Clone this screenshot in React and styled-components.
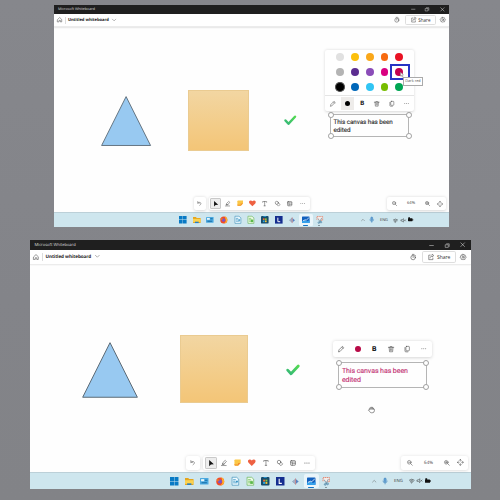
import React from 'react';
import styled, { createGlobalStyle, ThemeProvider, css } from 'styled-components';

const u = (n) => ({ theme }) => `${n * theme.k}px`;

const GlobalStyle = createGlobalStyle`
  * { box-sizing: border-box; }
  body {
    margin: 0;
    font-family: "Open Sans", "Noto Sans", sans-serif;
    text-rendering: geometricPrecision;
    color: #333;
  }
  svg { display: block; flex: none; overflow: visible; }
`;

const Desktop = styled.main`
  width: 500px;
  height: 500px;
  padding: 5px 0 0;
  overflow: hidden;
  background: linear-gradient(#86878c, #838489 60%, #828387);
  display: flex;
  flex-direction: column;
  gap: 13px;
`;

const Window = styled.section`
  width: ${({ theme }) => theme.width}px;
  height: ${({ theme }) => theme.height}px;
  margin-left: ${({ theme }) => theme.left}px;
  flex: none;
  display: flex;
  flex-direction: column;
  background: #fefefe;
  overflow: hidden;
`;

const TitleBar = styled.header`
  height: ${u(9)};
  flex: none;
  display: flex;
  align-items: center;
  padding-left: ${u(4)};
  background: #1f1f1f;
  color: #dedede;
  font-size: ${u(3.65)};
  line-height: 1;
  white-space: nowrap;
`;

const AppName = styled.span`
  padding-top: ${u(1.2)};
`;

const Grow = styled.div`
  flex: 1;
`;

const Cell = styled.span`
  width: ${({ $w, theme }) => $w * theme.k}px;
  flex: none;
  display: flex;
  align-items: center;
  justify-content: center;
`;

const Header = styled.div`
  height: ${u(13)};
  flex: none;
  display: flex;
  align-items: center;
  background: #fff;
  border-bottom: ${u(0.6)} solid #ececec;
  box-shadow: 0 ${u(0.5)} ${u(1.2)} #0000001a;
  position: relative;
`;

const BoardName = styled.strong`
  width: ${u(43)};
  padding: ${u(1.6)} 0 0 ${u(2.3)};
  font-size: ${u(4.15)};
  font-weight: 700;
  line-height: 1.5;
  letter-spacing: -0.015em;
  white-space: nowrap;
  color: #222;
`;

const Divider = styled.i`
  width: ${u(0.5)};
  height: ${u(7)};
  margin-left: ${u(-0.3)};
  background: #dcdcdc;
`;

const ShareButton = styled.button`
  width: ${u(30.5)};
  height: ${u(10.6)};
  padding: 0 ${u(4.2)} 0 ${u(4.4)};
  display: flex;
  align-items: center;
  justify-content: space-between;
  font-family: inherit;
  font-size: ${u(4.5)};
  color: #333;
  background: #fff;
  border: ${u(0.7)} solid #dedede;
  border-radius: ${u(1.6)};
`;

const Canvas = styled.div`
  flex: 1;
  position: relative;
`;

const Placed = styled.div`
  position: absolute;
  left: ${({ $x, theme }) => $x * theme.k}px;
  top: ${({ $y, theme }) => $y * theme.k + theme.dy}px;
`;

const Note = styled.div`
  width: ${u(61)};
  height: ${u(61)};
  background: linear-gradient(#f2d6a2, #f3cc88 60%, #f3c577);
  border: ${u(0.5)} solid #eacb91;
`;

const TextFrame = styled.div`
  position: relative;
  width: ${u(79.3)};
  height: ${u(22.7)};
  padding: ${u(3.7)} 0 0 ${u(2.4)};
  border: ${u(0.9)} solid #b5b5b5;
  font-family: Roboto, "Open Sans", sans-serif;
  font-size: ${u(6.3)};
  letter-spacing: -0.01em;
  line-height: ${u(7.9)};
  white-space: nowrap;
  color: ${({ $ink }) => $ink};
  -webkit-text-stroke: 0.12px ${({ $ink }) => $ink};
`;

const Handle = styled.i`
  position: absolute;
  width: ${u(5.8)};
  height: ${u(5.8)};
  border: ${u(0.85)} solid #a0a0a0;
  border-radius: 50%;
  background: #fff;
  ${({ $right }) => ($right ? css`right: ${u(-3.2)};` : css`left: ${u(-3.2)};`)}
  ${({ $bottom }) => ($bottom ? css`bottom: ${u(-3.2)};` : css`top: ${u(-3.2)};`)}
`;

const Popover = styled.div`
  width: ${u(89)};
  background: #fff;
  border-radius: ${u(2)};
  box-shadow: 0 ${u(0.4)} ${u(3)} #00000028;
`;

const Palette = styled.div`
  display: grid;
  grid-template-columns: repeat(5, ${u(14.85)});
  grid-auto-rows: ${u(14.8)};
  justify-content: center;
  padding-bottom: ${u(0.6)};
  border-bottom: ${u(0.5)} solid #e5e5e5;
`;

const Swatch = styled.div`
  display: flex;
  align-items: center;
  justify-content: center;
  position: relative;
  &::before {
    content: "";
    width: ${u(7.9)};
    height: ${u(7.9)};
    border-radius: 50%;
    background: ${({ $color }) => $color};
    ${({ $picked }) => $picked && css`
      box-shadow: 0 0 0 0.5px #777, 0 0 0 1px #333;
    `}
  }
`;

const Highlight = styled.span`
  position: absolute;
  left: -2px;
  top: -1px;
  width: 20px;
  height: 16px;
  border: 2px solid #2633c5;
`;

const Pointer = styled.span`
  position: absolute;
  left: 7px;
  top: 7px;
`;

const Tooltip = styled.span`
  position: absolute;
  left: 11px;
  top: 12.5px;
  width: 20px;
  height: 8.5px;
  display: flex;
  align-items: center;
  justify-content: center;
  z-index: 2;
  background: #fff;
  border: 0.8px solid #aaa;
  color: #555;
  font-size: 3.8px;
  line-height: 1;
  white-space: nowrap;
`;

const FormatBar = styled.div`
  height: ${u(14.8)};
  display: flex;
  align-items: center;
  justify-content: center;
`;

const FormatCell = styled.span`
  width: ${u(14.8)};
  height: 100%;
  display: flex;
  align-items: center;
  justify-content: center;
`;

const FillPad = styled.span`
  width: ${u(12.4)};
  height: ${u(12.4)};
  display: flex;
  align-items: center;
  justify-content: center;
  background: ${({ $open }) => ($open ? '#eeecea' : 'transparent')};
  &::before {
    content: "";
    width: ${u(5.2)};
    height: ${u(5.2)};
    border-radius: 50%;
    background: ${({ $color }) => $color};
  }
`;

const Bold = styled.b`
  padding-top: ${u(0.8)};
  font-family: Inter, sans-serif;
  font-weight: 800;
  font-size: ${u(6)};
  line-height: 1;
  color: #222;
`;

const Dock = styled.div`
  position: absolute;
  left: 0;
  right: 0;
  bottom: ${u(2)};
  display: flex;
  padding: 0 ${u(3)} 0 ${u(139.8)};
`;

const Pill = styled.div`
  height: ${u(13)};
  display: flex;
  align-items: center;
  padding: 0 ${({ $pad = 0, theme }) => $pad * theme.k}px;
  margin-right: ${({ $gap = 0, theme }) => $gap * theme.k}px;
  background: #fff;
  border-radius: ${u(2)};
  box-shadow: 0 ${u(0.4)} ${u(3)} #00000028;
`;

const ToolCell = styled(Cell)`
  width: ${u(12.4)};
  height: ${u(11)};
  ${({ $active }) => $active && css`
    background: #ededed;
    border: ${u(0.6)} solid #c9c9c9;
    border-radius: ${u(1)};
    width: ${u(11)};
    margin-right: ${u(0.4)};
  `}
`;

const ZoomLabel = styled(Cell)`
  padding-top: ${u(0.5)};
  font-size: ${u(4.1)};
  color: #444;
`;

const TaskBar = styled.footer`
  height: ${u(15)};
  flex: none;
  display: flex;
  align-items: center;
  padding-left: ${u(122.2)};
  background: #cee6ee;
  border-top: ${u(0.5)} solid #bcd0d8;
`;

const AppSlot = styled.span`
  width: ${u(13.65)};
  height: ${u(12.4)};
  display: flex;
  align-items: center;
  justify-content: center;
  border-radius: ${u(1.5)};
  background: ${({ $active }) => ($active ? '#eaf5fa' : 'transparent')};
  position: relative;
  ${({ $running, $active }) => $running && css`
    &::after {
      content: "";
      position: absolute;
      bottom: 0;
      height: ${u(1)};
      width: ${u($active ? 5 : 2)};
      border-radius: ${u(1)};
      background: ${$active ? '#1272c4' : '#7b8c96'};
    }
  `}
`;

const Lang = styled(Cell)`
  padding-top: ${u(0.6)};
  font-size: ${u(3.9)};
  color: #333;
`;

const line = { fill: 'none', stroke: '#4a4a4a', strokeWidth: 1.5, strokeLinecap: 'round', strokeLinejoin: 'round' };

const drawings = {
  home: <path {...line} d="M2 7.2 8 1.5l6 5.7v7.3h-4V10H6v4.5H2z" />,
  chevron: <path {...line} d="m1.5 4.5 6.5 6.5 6.5-6.5" />,
  caretUp: <path {...line} d="m2 11 6-6 6 6" />,
  timer: <g {...line}><circle cx="8" cy="9" r="5.8" /><path d="M8 6v3M6 1h4M12.8 3.2l1.4 1.2" /></g>,
  share: <g {...line}><path d="M6 3H2v12h11v-4" /><path d="M5.5 10.5C6 7 8 5.5 11 5.5V8l4.5-4L11 .5v2.3" /></g>,
  gear: <g {...line}><path d="m8 .5 2 2.3 2.9-.5.7 2.9L16 8l-2.4 2.8-.7 2.9-2.9-.4-2 2.2-2-2.2-2.9.4-.7-2.9L0 8l2.4-2.8.7-2.9 2.9.5z" /><circle cx="8" cy="8" r="2.6" /></g>,
  minimize: <path {...line} stroke="#eee" d="M2 8h12" />,
  restore: <g {...line} stroke="#eee"><path d="M2 5.5h8.5V14H2z" /><path d="M5 2.5h8.5V11" /></g>,
  close: <path {...line} stroke="#eee" d="m2.5 2.5 11 11M13.5 2.5l-11 11" />,
  pencil: <path {...line} d="m1.5 14.5 1-4.5 8.5-8.5q1-.7 2 .3l1 1q1 1 0 2L6 13.5zM10 3l3.3 3.3" />,
  trash: <g {...line}><path d="M1 3.5h14M5.5 3.5v-2h5v2M3 3.5l1 11.5h8l1-11.5M6.5 7v4.5M9.5 7v4.5" /></g>,
  copy: <g {...line}><rect x="5" y="1" width="9" height="11.5" rx="1.8" /><path d="M2.5 4v9q0 2.3 2.5 2.3h5" /></g>,
  more: <g fill="#555"><circle cx="2.5" cy="8" r="1.4" /><circle cx="8" cy="8" r="1.4" /><circle cx="13.5" cy="8" r="1.4" /></g>,
  undo: <path {...line} d="M2.5 1.5V7H8M2.5 7q3.500-4 7.500-2.500c5.200 2 4 7-1 10" />,
  select: <path fill="#151515" d="M3 0v16l4.400-4.300L15 11z" />,
  pen: <g {...line}><path d="m4 11 1-4 6.500-6 3 3L8.500 11zM4 11h4.500M1 15h13" /></g>,
  note: <g><path fill="#fbc746" d="M1 3q0-2 2-2h12v8l-6 6H3q-2 0-2-2z" /><path fill="#f28c32" d="M9 15V9h6z" /><path fill="#f5a43b" d="M1 11h8v4H3q-2 0-2-2z" /></g>,
  heart: <path fill="#ee6142" d="M8 14.800 1.200 8C-3 1.500 5-1 8 3c3-4 11-1.500 6.800 5z" />,
  text: <path {...line} d="M2 4V1.500h12V4M8 1.500v13M6 14.500h4" />,
  shapes: <g {...line}><circle cx="5.500" cy="5.500" r="4.700" /><path d="M10.500 6 15.500 10.500l-5 5-5-5" /></g>,
  template: <g {...line}><rect x="1.500" y="1.500" width="13" height="13" rx="2" /><path d="M1.500 5.500h13M6 5.500v9M6 10h8.500" /></g>,
  zoomOut: <g {...line}><circle cx="6.500" cy="6.500" r="5.200" /><path d="m10.500 10.500 4.700 4.700M4.300 6.500h4.400" /></g>,
  zoomIn: <g {...line}><circle cx="6.500" cy="6.500" r="5.200" /><path d="m10.500 10.500 4.700 4.700M4.300 6.500h4.400M6.500 4.300v4.400" /></g>,
  fit: <g {...line} strokeWidth="1.2"><path d="M5.800 3.200 8 .8l2.200 2.400M5.800 12.800 8 15.200l2.200-2.400M3.200 5.800.8 8l2.400 2.200M12.800 5.800 15.200 8l-2.400 2.200M8 1v4M8 11v4M1 8h4M11 8h4" /></g>,
  windows: <path fill="#087ac5" d="M0 0h7.600v7.600H0zM8.400 0H16v7.600H8.400zM0 8.400h7.600V16H0zM8.400 8.400H16V16H8.400z" />,
  folder: <g><path fill="#e5a51d" d="M0 2h6l2 2h8v11H0z" /><path fill="#fbd250" d="M0 6h16v7H0z" /><path fill="#277fc4" d="M4 12h8v3H4z" /></g>,
  monitor: <g><rect y="2" width="16" height="12" rx="1" fill="#4ba9df" /><path fill="#e8f7fb" d="M2 4h6v4H2z" /><path fill="#176ea8" d="M9 5h5v2H9zM3 10h10v2H3z" /></g>,
  firefox: <g><circle cx="8" cy="8.500" r="7.500" fill="#f04c29" /><path fill="#ffb32d" d="M10 0q5 2 5.500 8C16 13 12 16 8 16q3-2 4-5 0-5-2-11z" /><circle cx="7.500" cy="8.500" r="3.800" fill="#7956c8" /><path fill="#f47722" d="M1 4q3 0 6 2L3 9z" /></g>,
  writer: <g><path fill="#eefaff" stroke="#3489b4" strokeWidth="1.2" d="M2 .5h8.500L14.500 4v11.500H2z" /><path fill="none" stroke="#298abb" strokeWidth="1.3" d="M4 5h5M4 8h4M4 11h8" /><path fill="#3792c3" d="M9 7h4v3H9z" /></g>,
  calc: <g><path fill="#effbe9" stroke="#5aae49" strokeWidth="1.2" d="M2 .5h8.500L14.500 4v11.500H2z" /><path fill="none" stroke="#58b543" strokeWidth="1.3" d="M4 5h5M4 8h8M4 11h8" /><path fill="#5bb94b" d="M8 8h5v5H8z" /></g>,
  store: <g><rect width="16" height="16" rx="2" fill="#174b6a" /><path fill="#ef6c37" d="M4 5h3.600v3.600H4z" /><path fill="#8bc641" d="M8.400 5H12v3.600H8.400z" /><path fill="#2ea8e0" d="M4 9.400h3.600V13H4z" /><path fill="#f6c436" d="M8.400 9.400H12V13H8.400z" /><path fill="#258fc7" d="M5 0h6v2H5z" /></g>,
  lapp: <g><rect width="16" height="16" fill="#142d8f" /><path fill="none" stroke="#fff" strokeWidth="2" d="M6 3.500v8.500h5" /></g>,
  audio: <g><path fill="#a7b2c7" stroke="#748baa" d="m1 8 7-6v12z" /><path fill="#5383c5" d="m9 3 6 5-6 5z" /><path stroke="#df6f68" strokeWidth="1.3" d="M8 1v14" /></g>,
  board: <g><rect y="1" width="16" height="14" rx="1.3" fill="#1260be" /><path fill="#35a1ec" d="M0 11q6-4 9-1t7-2v6q0 1-1 1H1q-1 0-1-1z" /><path fill="none" stroke="#fff" strokeWidth="1.5" d="m2 10 5-2 2 1 6-6" /></g>,
  snip: <g fill="none" strokeWidth="1.6"><path fill="#f6ece9" stroke="#e07a62" strokeDasharray="2.500 1" d="M2 8V1h12v8H9" /><path stroke="#7290a0" d="m4 5 5 8M12 4 7 14" /><circle cx="6" cy="14" r="1.600" stroke="#4b87aa" /><circle cx="10.500" cy="13" r="1.600" stroke="#4b87aa" /></g>,
  mic: <g><rect x="5.200" y="0" width="5.600" height="10" rx="2.800" fill="#6aa3d5" stroke="#2976b8" strokeWidth="1.3" /><path {...line} stroke="#2976b8" d="M2.500 8q0 4.500 5.500 4.500T13.500 8M8 12.500V15.500" /></g>,
  wifi: <g {...line} stroke="#333" strokeWidth="1.7"><path d="M1 6q7-6 14 0M3.500 9q4.500-4 9 0M6 11.700q2-1.500 4 0L8 13.500z" /></g>,
  mute: <g {...line} stroke="#333"><path d="M1 6h3l4-4v12l-4-4H1zM11 6l4 4M15 6l-4 4" /></g>,
  battery: <g><rect x="0" y="4" width="14" height="9" rx="1.500" fill="#111" /><path fill="#111" d="M14 6.500h2v4h-2zM1 1h5v5H1z" /></g>,
  hand: <path fill="#fff" stroke="#555" strokeWidth="1.4" strokeLinejoin="round" d="M3 9V5.500q1.200-1.500 2.200 0V3.500q1.200-1.400 2.300 0V2.800q1.300-1.300 2.400 0v1.400q1.400-1 2.300.5v2q1.500-.8 2 .8V10q0 5-5 5H8q-3 0-4.500-3L1 9.500Q1.400 7.500 3 9zM5.200 5.500V8M7.500 3.500V8M9.900 4V8M12.200 6v2" />,
  arrow: <path fill="#fff" stroke="#555" strokeWidth="1.1" d="M4 0v12l3-2.600L9 15l2.500-1-2.300-5H13z" />,
};

const Glyph = styled.svg.attrs({ viewBox: '0 0 16 16', 'aria-hidden': true })`
  width: ${({ $size, theme }) => $size * theme.k}px;
  height: ${({ $size, theme }) => $size * theme.k}px;
`;

const Icon = ({ name, size = 5.4 }) => <Glyph $size={size}>{drawings[name]}</Glyph>;

const Shape = styled.svg`
  width: ${({ $w, theme }) => $w * theme.k}px;
  height: ${({ $h, theme }) => $h * theme.k}px;
`;

const colors = [
  '#e1e1e1', '#fcc00c', '#faa81a', '#f76b10', '#e91224',
  '#b4b4b4', '#5b2d90', '#8b4db8', '#d90080', '#c3004f',
  '#000000', '#0067b9', '#31c5f4', '#77bd00', '#00a653',
];
const tools = ['pen', 'note', 'heart', 'text', 'shapes', 'template', 'more'];
const apps = ['windows', 'folder', 'monitor', 'firefox', 'writer', 'calc', 'store', 'lapp', 'audio', 'board', 'snip'];

function ColorPalette() {
  return (
    <Palette>
      {colors.map((color, i) => (
        <Swatch key={color} $color={color} $picked={i === 10}>
          {i === 9 && (
            <>
              <Highlight />
              <Pointer><Icon name="arrow" size={5.5} /></Pointer>
              <Tooltip>Dark red</Tooltip>
            </>
          )}
        </Swatch>
      ))}
    </Palette>
  );
}

function Whiteboard({ theme, ink, fill, paletteOpen }) {
  return (
    <ThemeProvider theme={theme}>
      <Window>
        <TitleBar>
          <AppName>Microsoft Whiteboard</AppName>
          <Grow />
          <Cell $w={14.2}><Icon name="minimize" size={4.5} /></Cell>
          <Cell $w={14.2}><Icon name="restore" size={4.5} /></Cell>
          <Cell $w={14.2}><Icon name="close" size={4.8} /></Cell>
        </TitleBar>
        <Header>
          <Cell $w={11.4}><Icon name="home" size={5.4} /></Cell>
          <Divider />
          <BoardName>Untitled whiteboard</BoardName>
          <Cell $w={11}><Icon name="chevron" size={4.2} /></Cell>
          <Grow />
          <Cell $w={16}><Icon name="timer" size={5.6} /></Cell>
          <ShareButton><Icon name="share" size={5.4} />Share</ShareButton>
          <Cell $w={13.4}><Icon name="gear" size={5.6} /></Cell>
        </Header>
        <Canvas>
          <Placed $x={46.9} $y={69}>
            <Shape $w={50.2} $h={50} viewBox="0 0 50.2 50">
              <path d="M25.1 .6 49.6 49.5H.6z" fill="#98c9f1" stroke="#4d5b66" strokeWidth=".8" strokeLinejoin="round" />
            </Shape>
          </Placed>
          <Placed $x={134.2} $y={63}><Note /></Placed>
          <Placed $x={229.5} $y={88.4}>
            <Shape $w={12.5} $h={10.5} viewBox="0 0 25 21">
              <defs>
                <linearGradient id="tick" x1="0" y1="1" x2="1" y2="0">
                  <stop stopColor="#35b779" />
                  <stop offset="1" stopColor="#52d952" />
                </linearGradient>
              </defs>
              <path d="m3 11 6 6.500L22 3.500" fill="none" stroke="url(#tick)" strokeWidth="5" strokeLinecap="round" strokeLinejoin="round" />
            </Shape>
          </Placed>
          <Placed $x={276.1} $y={87.3}>
            <TextFrame $ink={ink}>
              This canvas has been<br />edited
              <Handle /><Handle $right /><Handle $bottom /><Handle $right $bottom />
            </TextFrame>
          </Placed>
          <Placed $x={271.2} $y={paletteOpen ? 23 : 67.8}>
            <Popover>
              {paletteOpen && <ColorPalette />}
              <FormatBar>
                <FormatCell><Icon name="pencil" size={5.5} /></FormatCell>
                <FormatCell><FillPad $color={fill} $open={paletteOpen} /></FormatCell>
                <FormatCell><Bold>B</Bold></FormatCell>
                <FormatCell><Icon name="trash" size={5.5} /></FormatCell>
                <FormatCell><Icon name="copy" size={5.5} /></FormatCell>
                <FormatCell><Icon name="more" size={5} /></FormatCell>
              </FormatBar>
            </Popover>
          </Placed>
          {!paletteOpen && <Placed $x={302.6} $y={126.8}><Icon name="hand" size={6.5} /></Placed>}
          <Dock>
            <Pill $gap={3.4}><Cell $w={12.2}><Icon name="undo" size={4.8} /></Cell></Pill>
            <Pill $pad={1}>
              <ToolCell $active><Icon name="select" size={5.6} /></ToolCell>
              {tools.map((name) => (
                <ToolCell key={name}>
                  <Icon name={name} size={name === 'heart' ? 6.8 : name === 'note' ? 6.4 : 5.3} />
                </ToolCell>
              ))}
            </Pill>
            <Grow />
            <Pill $pad={1}>
              <Cell $w={14}><Icon name="zoomOut" size={5} /></Cell>
              <ZoomLabel $w={19}>64%</ZoomLabel>
              <Cell $w={13.5}><Icon name="zoomIn" size={5} /></Cell>
              <Cell $w={11}><Icon name="fit" size={6} /></Cell>
            </Pill>
          </Dock>
        </Canvas>
        <TaskBar>
          {apps.map((name) => (
            <AppSlot key={name} $active={name === 'board'} $running={name === 'board' || name === 'snip'}>
              <Icon name={name} size={name === 'audio' ? 6.4 : 7.6} />
            </AppSlot>
          ))}
          <Grow />
          <Cell $w={9}><Icon name="caretUp" size={4} /></Cell>
          <Cell $w={10}><Icon name="mic" size={5.5} /></Cell>
          <Lang $w={14}>ENG</Lang>
          <Cell $w={9}><Icon name="wifi" size={5} /></Cell>
          <Cell $w={6.5}><Icon name="mute" size={4.8} /></Cell>
          <Cell $w={8}><Icon name="battery" size={5.2} /></Cell>
          <Cell $w={34.5} />
        </TaskBar>
      </Window>
    </ThemeProvider>
  );
}

const small = { k: 1, width: 395, height: 222, left: 54, dy: 0 };
const large = { k: 1.1165, width: 441, height: 249, left: 30, dy: 0.3 };

export default function App() {
  return (
    <>
      <GlobalStyle />
      <Desktop>
        <Whiteboard theme={small} ink="#303030" fill="#000" paletteOpen />
        <Whiteboard theme={large} ink="#c33374" fill="#b80b47" />
      </Desktop>
    </>
  );
}
